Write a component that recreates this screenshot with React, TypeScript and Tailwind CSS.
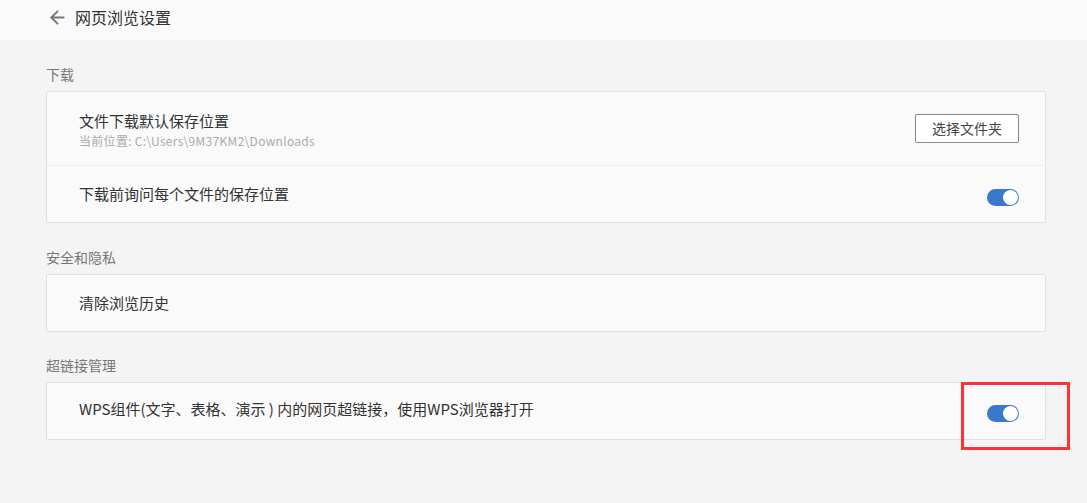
import { ArrowLeft } from 'lucide-react';

const font = 'font-["Microsoft_YaHei","Noto_Sans_CJK_SC",sans-serif]';

function Toggle() {
  return (
    <div className="w-[32px] h-[17px] rounded-full bg-[#3a78cc] flex items-center justify-end pr-[1px]">
      <div className="w-[15px] h-[15px] rounded-full bg-white" />
    </div>
  );
}

function SectionLabel({ text }: { text: string }) {
  return <div className="text-[14px] leading-[18px] text-[#777] pb-[8px]">{text}</div>;
}

export default function App() {
  return (
    <div className={`${font} w-[1087px] h-[503px] bg-[#f4f4f4] relative`}>
      {/* header */}
      <div className="h-[40px] bg-[#fafafa] flex items-center pl-[47px] pb-[6px]">
        <ArrowLeft className="text-[#777]" size={21} strokeWidth={2.2} />
        <span className="ml-[7px] text-[16px] text-[#333]">网页浏览设置</span>
      </div>

      <div className="pl-[46px] w-[1046px] pt-[25px]">
        <SectionLabel text="下载" />
        <div className="border border-[#e0e0e0] rounded-[2px] bg-[#fafafa]">
          <div className="h-[74px] flex items-center justify-between pl-[32px] pr-[24px] border-b border-[#ececec] mr-[2px]">
            <div className="pt-[2px]">
              <div className="text-[15px] leading-[20px] text-[#333]">文件下载默认保存位置</div>
              <div className="text-[12px] leading-[17px] text-[#aaa] mt-[1px] tracking-[0.3px]">当前位置: C:\Users\9M37KM2\Downloads</div>
            </div>
            <button className="w-[104px] h-[29px] border border-[#888] rounded-[2px] bg-white text-[14px] text-[#444]">
              选择文件夹
            </button>
          </div>
          <div className="h-[56px] flex items-center justify-between pl-[32px] pr-[26px]">
            <span className="text-[15px] text-[#333] mt-[1px]">下载前询问每个文件的保存位置</span>
            <div className="mt-[6px]"><Toggle /></div>
          </div>
        </div>

        <div className="pt-[25px]">
          <SectionLabel text="安全和隐私" />
          <div className="border border-[#e0e0e0] rounded-[2px] bg-[#fafafa] h-[58px] flex items-center pl-[32px]">
            <span className="text-[15px] text-[#333]">清除浏览历史</span>
          </div>
        </div>

        <div className="pt-[24px]">
          <SectionLabel text="超链接管理" />
          <div className="border border-[#e0e0e0] rounded-[2px] bg-[#fafafa] h-[58px] flex items-center justify-between pl-[32px] pr-[26px]">
            <span className="text-[15px] text-[#333] -mt-[3px]">WPS组件(文字、表格、演示 ) 内的网页超链接，使用WPS浏览器打开</span>
            <div className="mt-[4px]"><Toggle /></div>
          </div>
        </div>
      </div>

      {/* annotation */}
      <div className="absolute left-[961px] top-[382px] w-[109px] h-[68px] border-[3px] border-[#f33]" />
    </div>
  );
}
